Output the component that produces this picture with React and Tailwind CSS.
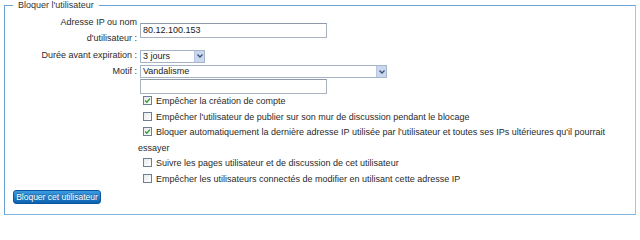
import React from "react";

function Checkbox({ checked }) {
  return (
    <span className="inline-block align-middle mr-[4px] ml-[5px] relative top-[-1px]">
      <svg width="9" height="9" viewBox="0 0 9 9" className="block">
        <defs>
          <linearGradient id="cbg" x1="0" y1="0" x2="1" y2="1">
            <stop offset="0" stopColor="#e6e9ec" />
            <stop offset="1" stopColor="#ffffff" />
          </linearGradient>
        </defs>
        <rect x="0.5" y="0.5" width="8" height="8" fill="url(#cbg)" stroke="#6f7f91" />
        {checked && (
          <path d="M2.2 4.6 L3.8 6.2 L6.9 2.6" fill="none" stroke="#2f9b2f" strokeWidth="1.4" />
        )}
      </svg>
    </span>
  );
}

function Select({ value, width }) {
  return (
    <div
      className={`ml-[2px] h-[13px] border border-[#a5b4c7] bg-white flex items-center justify-between ${width}`}
    >
      <span className="pl-[2px] leading-[11px] text-[#1a1a1a]">{value}</span>
      <span className="h-[11px] w-[10px] bg-[#c9d7ef] border-l border-[#b6c7e4] flex items-center justify-center">
        <svg width="6" height="4" viewBox="0 0 6 4">
          <path d="M0.5 0.5 L3 3 L5.5 0.5" fill="none" stroke="#3f4f72" strokeWidth="1.3" />
        </svg>
      </span>
    </div>
  );
}

function TextInput({ value }) {
  return (
    <div className="ml-[2px] h-[15px] w-[187px] border border-[#a9b3bf] border-t-[#8e9aa8] bg-white flex items-center">
      <span className="pl-[2px] leading-[11px] text-[#1a1a1a]">{value}</span>
    </div>
  );
}

export default function App() {
  return (
    <div
      className="bg-white w-[640px] h-[217px] text-[9px] text-[#2a2a2a]"
      style={{ fontFamily: '"Liberation Sans", Arial, sans-serif' }}
    >
      <fieldset className="mx-[4px] border border-[#6aa2d3] border-r-[#9fc6e6] border-b-[#7fb2dc] pl-[8px] pt-[3px] pb-[9px]">
        <legend className="px-[5px] leading-[11px] text-[#333]">Bloquer l'utilisateur</legend>

        <div className="flex items-center h-[32px]">
          <div className="w-[125px] text-right leading-[16px] pr-[1px]">
            Adresse IP ou nom
            <br />
            d'utilisateur :
          </div>
          <div className="pl-[0px]">
            <TextInput value="80.12.100.153" />
          </div>
        </div>

        <div className="flex items-center h-[16px] mt-[2px]">
          <div className="w-[125px] text-right pr-[1px]">Durée avant expiration :</div>
          <Select value="3 jours" width="w-[65px]" />
        </div>

        <div className="flex items-center h-[15px]">
          <div className="w-[125px] text-right pr-[1px]">Motif :</div>
          <Select value="Vandalisme" width="w-[247px]" />
        </div>

        <div className="flex items-center h-[15px]">
          <div className="w-[125px]" />
          <TextInput value="" />
        </div>

        <div className="flex">
          <div className="w-[125px] shrink-0" />
          <div className="leading-[15.5px] w-[472px]">
            <div>
              <Checkbox checked />
              Empêcher la création de compte
            </div>
            <div>
              <Checkbox />
              Empêcher l'utilisateur de publier sur son mur de discussion pendant le blocage
            </div>
            <div>
              <Checkbox checked />
              Bloquer automatiquement la dernière adresse IP utilisée par l'utilisateur et toutes ses IPs ultérieures qu'il pourrait essayer
            </div>
            <div>
              <Checkbox />
              Suivre les pages utilisateur et de discussion de cet utilisateur
            </div>
            <div>
              <Checkbox />
              Empêcher les utilisateurs connectés de modifier en utilisant cette adresse IP
            </div>
          </div>
        </div>

        <div className="mt-[3px]">
          <button className="h-[14px] w-[88px] rounded-[3px] border border-[#0c56a0] bg-gradient-to-b from-[#3a9be3] to-[#0b62b0] text-white leading-[12px] text-[8.5px] whitespace-nowrap [text-shadow:0_-1px_0_rgba(0,0,0,0.3)]">
            Bloquer cet utilisateur
          </button>
        </div>
      </fieldset>
    </div>
  );
}
